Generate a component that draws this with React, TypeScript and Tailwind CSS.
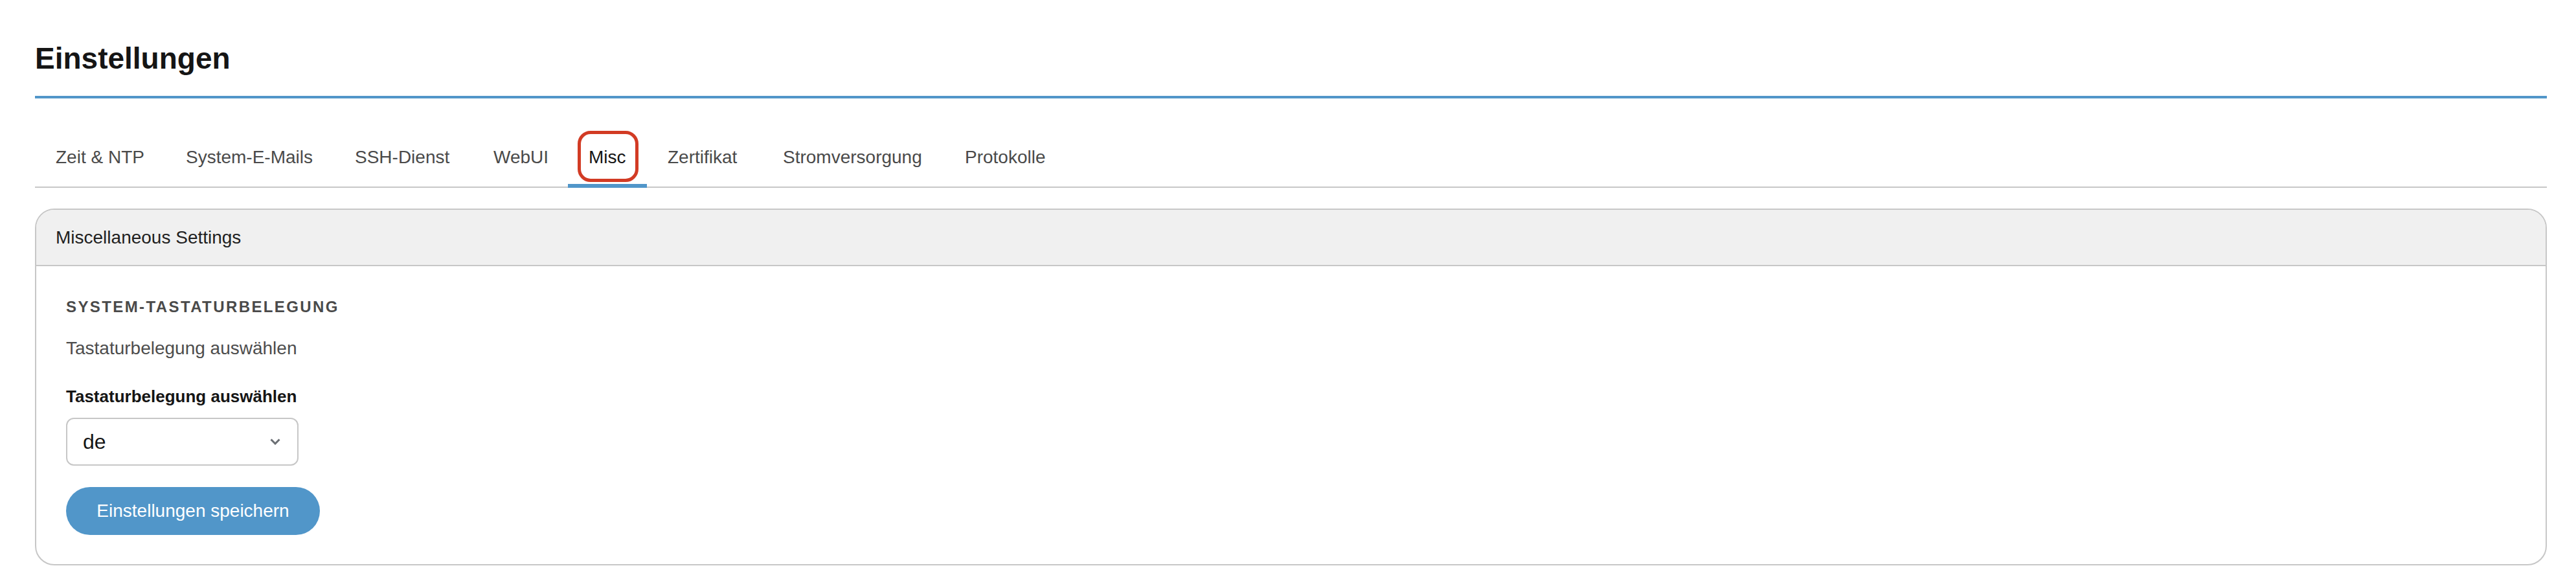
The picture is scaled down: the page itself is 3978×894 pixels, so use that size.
import React from "react";

const tabs: { label: string; w: string }[] = [
  { label: "Zeit & NTP", w: "w-[201px]" },
  { label: "System-E-Mails", w: "w-[261px]" },
  { label: "SSH-Dienst", w: "w-[214px]" },
  { label: "WebUI", w: "w-[147px]" },
  { label: "Misc", w: "w-[122px]" },
  { label: "Zertifikat", w: "w-[178px]" },
  { label: "Stromversorgung", w: "w-[281px]" },
  { label: "Protokolle", w: "w-[189px]" },
];

export default function App() {
  return (
    <div
      className="w-[3978px] h-[894px] bg-white pl-[54px] pr-[45px] overflow-hidden"
      style={{ fontFamily: '"Liberation Sans", Arial, sans-serif' }}
    >
      <h1 className="pt-[67px] text-[46px] leading-none font-bold text-[#151515]">
        Einstellungen
      </h1>
      <div className="mt-[35px] h-[4px] bg-[#5196c9]" />

      <div className="mt-[46px] flex border-b-2 border-[#c7c7c7]">
        {tabs.map((t) => {
          const active = t.label === "Misc";
          return (
            <div
              key={t.label}
              className={"relative shrink-0 pl-[32px] pt-[31px] pb-[31px] " + t.w}
            >
              <span
                className={
                  "block text-[28px] leading-none whitespace-nowrap " +
                  (active ? "text-[#151515]" : "text-[#4a4a4a]")
                }
              >
                {t.label}
              </span>
              {active && (
                <>
                  <div className="absolute left-0 right-0 bottom-[-2px] h-[6px] bg-[#5196c9]" />
                  <div className="absolute left-[15px] top-[4px] w-[94px] h-[79px] border-[5px] border-[#d23b24] rounded-[20px]" />
                </>
              )}
            </div>
          );
        })}
      </div>

      <div className="mt-[32px] border-2 border-[#c7c7c7] rounded-[30px] overflow-hidden">
        <div className="h-[87px] bg-[#f0f0f0] border-b-2 border-[#c7c7c7] flex items-center px-[30px]">
          <span className="text-[28px] leading-none text-[#1f1f1f]">
            Miscellaneous Settings
          </span>
        </div>
        <div className="px-[46px] pt-[51px] pb-[45px] flex flex-col items-start">
          <div className="text-[24px] leading-none font-bold uppercase tracking-[2.4px] text-[#4a4a4a]">
            System-Tastaturbelegung
          </div>
          <div className="mt-[38px] text-[28px] leading-none text-[#4d4d4d]">
            Tastaturbelegung auswählen
          </div>
          <div className="mt-[47px] text-[26px] leading-none font-bold text-[#151515]">
            Tastaturbelegung auswählen
          </div>
          <div className="mt-[20px] w-[359px] h-[74px] border-2 border-[#c7c7c7] rounded-[12px] flex items-center justify-between pl-[24px] pr-[26px]">
            <span className="text-[32px] leading-none text-[#151515]">de</span>
            <svg width="16" height="10" viewBox="0 0 16 10" className="block">
              <polyline
                points="1.5,1.5 8,8 14.5,1.5"
                fill="none"
                stroke="#6a6e73"
                strokeWidth="3"
              />
            </svg>
          </div>
          <button className="mt-[33px] w-[392px] h-[74px] rounded-full bg-[#5196c9] text-white text-[28px] leading-none flex items-center justify-center">
            Einstellungen speichern
          </button>
        </div>
      </div>
    </div>
  );
}
